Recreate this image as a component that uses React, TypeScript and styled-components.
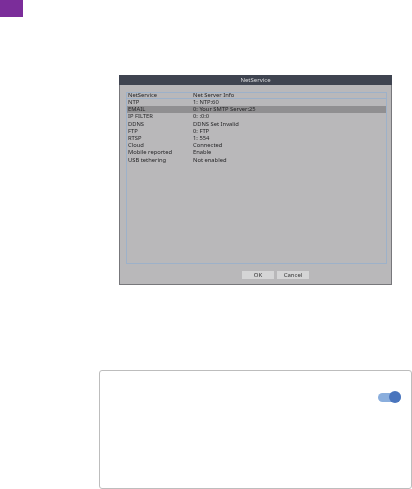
import React from "react";
import styled, { createGlobalStyle } from "styled-components";

const rows = [
  { name: "NTP", info: "1: NTP:60" },
  { name: "EMAIL", info: "0: Your SMTP Server:25", selected: true },
  { name: "IP FILTER", info: "0: :0:0" },
  { name: "DDNS", info: "DDNS Set Invalid" },
  { name: "FTP", info: "0: FTP" },
  { name: "RTSP", info: "1: 554" },
  { name: "Cloud", info: "Connected" },
  { name: "Mobile reported", info: "Enable" },
  { name: "USB tethering", info: "Not enabled" },
];

const GlobalStyle = createGlobalStyle`
  html, body {
    margin: 0;
    padding: 0;
    background: #fff;
  }
`;

const Page = styled.div`
  width: 412px;
  height: 489px;
  overflow: hidden;
  font-family: "Noto Sans", sans-serif;
`;

const Marker = styled.div`
  width: 23px;
  height: 17px;
  background: #7b2d9a;
`;

const Dialog = styled.div`
  width: 273px;
  height: 210px;
  margin: 58px 0 0 119px;
  box-sizing: border-box;
  display: flex;
  flex-direction: column;
  background: #b9b8ba;
  border: solid #77777b;
  border-width: 0 1px 1px;
  filter: blur(0.35px);
`;

const TitleBar = styled.div`
  height: 10px;
  margin: 0 -1px;
  flex-shrink: 0;
  display: flex;
  align-items: center;
  justify-content: center;
  background: #3f4450;
  color: #d8d9dc;
  font-size: 6px;
`;

const ListBox = styled.div`
  height: 172px;
  margin: 7px 4px 0 6px;
  box-sizing: border-box;
  border: 1px solid #9db1c9;
`;

const Row = styled.div<{ $selected?: boolean; $head?: boolean }>`
  height: ${(p) => (p.$head ? "6px" : "7.2px")};
  box-sizing: border-box;
  padding-left: 1px;
  display: grid;
  grid-template-columns: 65px 1fr;
  align-items: center;
  background: ${(p) => (p.$selected ? "#908f91" : "transparent")};
  border-bottom: ${(p) => (p.$head ? "1px solid #9db1c9" : "none")};
  color: #262628;
  font-size: 5.8px;
  line-height: 5px;
  white-space: nowrap;
`;

const Footer = styled.div`
  display: flex;
  justify-content: center;
  gap: 3px;
  margin-top: 7px;
  padding-left: 40px;
`;

const DialogButton = styled.div`
  width: 32px;
  height: 8px;
  display: flex;
  align-items: center;
  justify-content: center;
  background: #d5d5d6;
  color: #333;
  font-size: 6px;
`;

const Card = styled.div`
  width: 313px;
  height: 119px;
  margin: 85px 0 0 99px;
  box-sizing: border-box;
  padding: 20px 10px 0 0;
  display: flex;
  justify-content: flex-end;
  align-items: flex-start;
  background: #fff;
  border: 1px solid #bdbdbd;
  border-radius: 3px;
`;

const Toggle = styled.div`
  position: relative;
  width: 23px;
  height: 9px;
  margin-top: 1.5px;
  border-radius: 5px;
  background: #8aaedd;
`;

const Knob = styled.div`
  position: absolute;
  right: 0;
  top: -1.5px;
  width: 12px;
  height: 12px;
  border-radius: 50%;
  background: #4a75bd;
`;

export default function App() {
  return (
    <Page>
      <GlobalStyle />
      <Marker />
      <Dialog>
        <TitleBar>NetService</TitleBar>
        <ListBox>
          <Row $head>
            <span>NetService</span>
            <span>Net Server Info</span>
          </Row>
          {rows.map((r) => (
            <Row key={r.name} $selected={r.selected}>
              <span>{r.name}</span>
              <span>{r.info}</span>
            </Row>
          ))}
        </ListBox>
        <Footer>
          <DialogButton>OK</DialogButton>
          <DialogButton>Cancel</DialogButton>
        </Footer>
      </Dialog>
      <Card>
        <Toggle>
          <Knob />
        </Toggle>
      </Card>
    </Page>
  );
}
